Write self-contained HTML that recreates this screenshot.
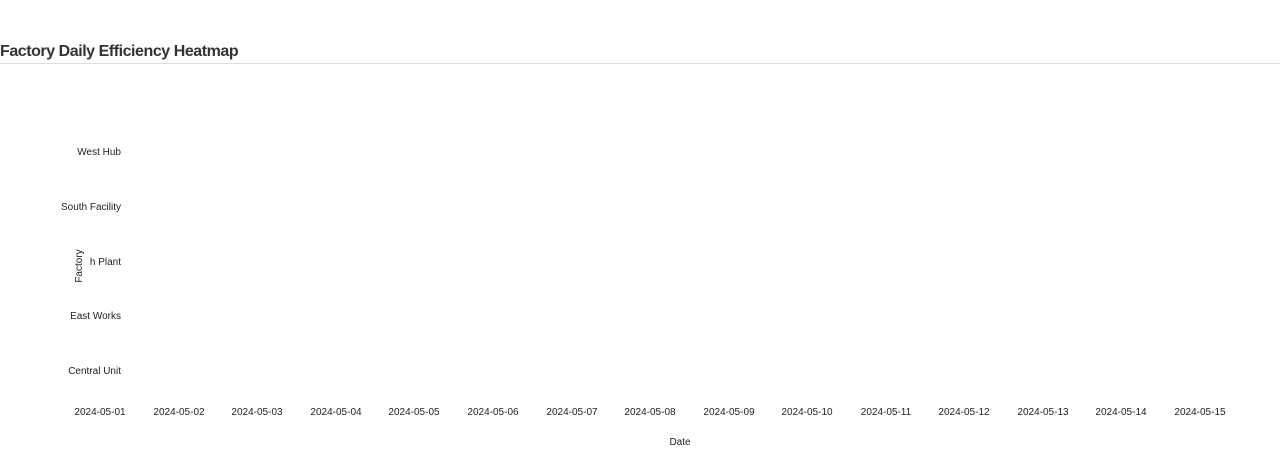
<!DOCTYPE html>
<html><head><style>
body{margin:0;width:1280px;height:454px;background:#fff;position:relative;overflow:hidden;font-family:"Liberation Sans",sans-serif;color:#222;}
h1{position:absolute;left:0;top:43px;margin:0;font-size:16px;font-weight:bold;color:#333;letter-spacing:-0.45px;line-height:18px}
.hr{position:absolute;left:0;top:63px;width:1280px;height:1px;background:#ddd}
.y{position:absolute;right:1159px;font-size:10px;white-space:nowrap;line-height:12px}
.x{position:absolute;top:407px;font-size:10px;width:80px;text-align:center;margin-left:-40px;line-height:12px}
.yt{position:absolute;left:80px;top:266px;font-size:10px;transform:translate(-50%,-50%) rotate(-90deg);line-height:10px}
</style></head><body>
<h1>Factory Daily Efficiency Heatmap</h1>
<div class="hr"></div>
<div class="y" style="top:147px">West Hub</div>
<div class="y" style="top:202px">South Facility</div>
<div class="y" style="top:257px">h Plant</div>
<div class="y" style="top:311px">East Works</div>
<div class="y" style="top:366px">Central Unit</div>
<div class="yt">Factory</div>
<div class="x" style="left:100px">2024-05-01</div>
<div class="x" style="left:179px">2024-05-02</div>
<div class="x" style="left:257px">2024-05-03</div>
<div class="x" style="left:336px">2024-05-04</div>
<div class="x" style="left:414px">2024-05-05</div>
<div class="x" style="left:493px">2024-05-06</div>
<div class="x" style="left:572px">2024-05-07</div>
<div class="x" style="left:650px">2024-05-08</div>
<div class="x" style="left:729px">2024-05-09</div>
<div class="x" style="left:807px">2024-05-10</div>
<div class="x" style="left:886px">2024-05-11</div>
<div class="x" style="left:964px">2024-05-12</div>
<div class="x" style="left:1043px">2024-05-13</div>
<div class="x" style="left:1121px">2024-05-14</div>
<div class="x" style="left:1200px">2024-05-15</div>
<div class="x" style="left:680px;top:437px">Date</div>
</body></html>
